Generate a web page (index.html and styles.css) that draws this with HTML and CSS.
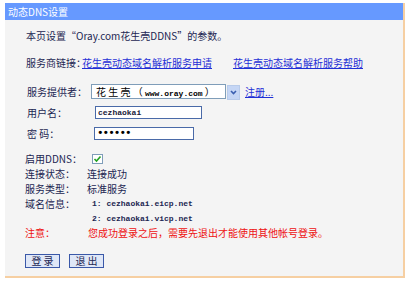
FILE: index.html
```html
<!DOCTYPE html>
<html lang="zh-CN">
<head>
    <meta charset="UTF-8">
    <title>动态DNS设置</title>
    <link rel="stylesheet" href="styles.css">
</head>
<body>

    <div class="panel">
        <div class="title">动态DNS设置</div>

        <div class="content">
            <div class="intro">本页设置“Oray.com花生壳DDNS”的参数。</div>

            <div class="links">
                <span>服务商链接：</span><a href="#">花生壳动态域名解析服务申请</a><a href="#" class="link-help">花生壳动态域名解析服务帮助</a>
            </div>

            <!-- 登录表单 -->
            <div class="form">
                <div class="form-row">
                    <span class="form-label">服务提供者：</span>
                    <span class="select">
                        <span class="select-text">花 生 壳 （ <span class="mono">www.oray.com</span> ）</span>
                    </span>
                    <span class="select-btn">
                        <svg width="7" height="5" viewBox="0 0 7 5"><path d="M1 1 L3.5 3.5 L6 1" fill="none" stroke="#3a5fb0" stroke-width="1.6"/></svg>
                    </span>
                    <a href="#" class="register">注册...</a>
                </div>
                <div class="form-row">
                    <span class="form-label">用户名：</span>
                    <input type="text" class="input input-user" value="cezhaokai">
                </div>
                <div class="form-row">
                    <span class="form-label">密 码：</span>
                    <input type="password" class="input input-pass" value="123456">
                </div>
            </div>

            <!-- 状态信息 -->
            <div class="status">
                <div class="status-row">
                    <span class="status-label">启用DDNS：</span>
                    <span class="checkbox">
                        <svg width="9" height="8" viewBox="0 0 9 8"><path d="M1.5 4 L3.5 6 L7.5 1.5" fill="none" stroke="#21a121" stroke-width="1.6"/></svg>
                    </span>
                </div>
                <div class="status-row">
                    <span class="status-label">连接状态：</span>
                    <span>连接成功</span>
                </div>
                <div class="status-row">
                    <span class="status-label">服务类型：</span>
                    <span>标准服务</span>
                </div>
                <div class="status-row">
                    <span class="status-label">域名信息：</span>
                    <span class="domain">1: cezhaokai.eicp.net</span>
                </div>
                <div class="status-row row-small">
                    <span class="status-label"></span>
                    <span class="domain">2: cezhaokai.vicp.net</span>
                </div>
                <div class="status-row notice">
                    <span class="status-label">注意：</span>
                    <span>您成功登录之后，需要先退出才能使用其他帐号登录。</span>
                </div>
            </div>

            <div class="buttons">
                <button type="button">登 录</button>
                <button type="button">退 出</button>
            </div>
        </div>
    </div>

</body>
</html>
```

FILE: styles.css
```css
body {
    margin: 0;
    background: #ffffff;
    font-family: "Noto Sans CJK SC", "Noto Sans", sans-serif;
    font-size: 10px;
    color: #1c2652;
}

.panel {
    margin: 3px 0 0 5px;
    width: 398px;
    background: #f4f4f4;
    border-right: 2px solid #f6cfa2;
    border-bottom: 2px solid #f6cfa2;
}

.title {
    height: 17px;
    line-height: 17px;
    padding-left: 3px;
    background: #6699ff;
    color: #ffffff;
    font-size: 10px;
}

.content { padding: 8px 0 8px 20px; }

.intro { height: 16px; line-height: 16px; padding-left: 1px; }

.links { height: 16px; line-height: 16px; margin-top: 11px; padding-left: 1px; }
a { color: #1f2fd6; }
.links a { margin-left: -4px; }
.links .link-help { margin-left: 21px; }

.mono { font-family: "Liberation Mono", monospace; font-size: 8px; font-weight: bold; }

.form { margin-top: 11px; padding-left: 2px; }
.form-row { display: flex; align-items: center; height: 18px; margin-bottom: 3px; }
.form-label { width: 64px; }

.select {
    display: flex;
    align-items: center;
    width: 133px;
    height: 13px;
    border: 1px solid #7f9db9;
    background: #ffffff;
    color: #000000;
}
.select-text { padding-left: 4px; white-space: pre; }
.select-btn {
    display: flex;
    align-items: center;
    justify-content: center;
    width: 11px;
    height: 13px;
    margin: 2px 0 0 1px;
    border: 1px solid #b8cbea;
    background: #c5d6f5;
}
.register { margin-left: 5px; }

.input {
    height: 11px;
    padding: 0 2px;
    margin-left: 4px;
    border: 1px solid #4a6aa8;
    background: #ffffff;
    font-family: "Liberation Mono", monospace;
    font-size: 8px;
    font-weight: bold;
    color: #1a1a3a;
}
.input-user { width: 101px; }
.input-pass {
    width: 94px;
    margin-left: 3px;
    font-size: 11px;
    letter-spacing: -1px;
    color: #000000;
}

.status { margin-top: 9px; }
.status-row { display: flex; align-items: center; height: 15px; }
.status-row.row-small { height: 14px; }
.status-label { width: 62px; flex-shrink: 0; }

.checkbox {
    display: flex;
    align-items: center;
    justify-content: center;
    width: 9px;
    height: 8px;
    margin-left: 5px;
    border: 1px solid #7f9db9;
    background: #ffffff;
}

.domain {
    padding-left: 5px;
    white-space: pre;
    font-family: "Liberation Mono", monospace;
    font-size: 8px;
    font-weight: bold;
}

.notice { color: #ee1111; }
.notice span:last-child { margin-left: 1px; }

.buttons { display: flex; gap: 9px; margin-top: 14px; }
button {
    width: 35px;
    height: 14px;
    padding: 0;
    border: 1px solid #3a58a8;
    background: #dfe7f7;
    font-family: "Noto Sans CJK SC", sans-serif;
    font-size: 10px;
    line-height: 12px;
    color: #1c2652;
    cursor: pointer;
}
```
